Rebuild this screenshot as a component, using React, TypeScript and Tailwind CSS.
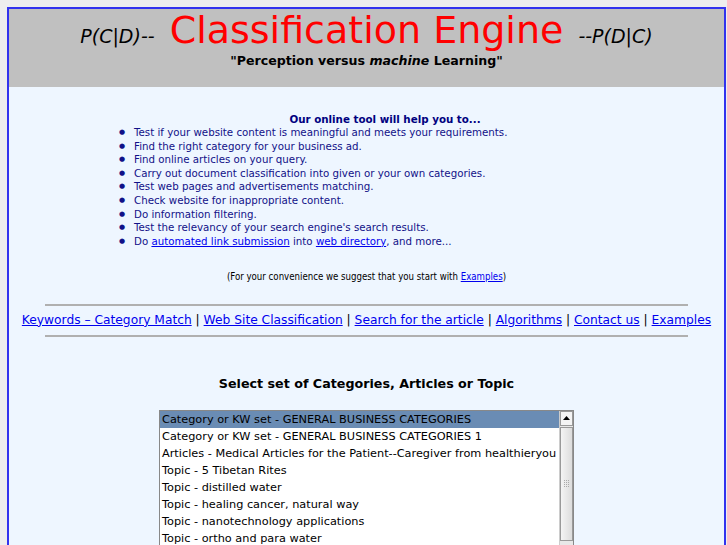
import React from "react";

const items: React.ReactNode[] = [
  "Test if your website content is meaningful and meets your requirements.",
  "Find the right category for your business ad.",
  "Find online articles on your query.",
  "Carry out document classification into given or your own categories.",
  "Test web pages and advertisements matching.",
  "Check website for inappropriate content.",
  "Do information filtering.",
  "Test the relevancy of your search engine's search results.",
  <>
    Do <a className="text-[#0000ee] underline" href="#">automated link submission</a> into{" "}
    <a className="text-[#0000ee] underline" href="#">web directory</a>, and more...
  </>,
];

const links = [
  "Keywords – Category Match",
  "Web Site Classification",
  "Search for the article",
  "Algorithms",
  "Contact us",
  "Examples",
];

const options = [
  "Category or KW set - GENERAL BUSINESS CATEGORIES",
  "Category or KW set - GENERAL BUSINESS CATEGORIES 1",
  "Articles - Medical Articles for the Patient--Caregiver from healthieryou",
  "Topic - 5 Tibetan Rites",
  "Topic - distilled water",
  "Topic - healing cancer, natural way",
  "Topic - nanotechnology applications",
  "Topic - ortho and para water",
  "Topic - water",
];

export default function App() {
  return (
    <div className="h-[545px] overflow-hidden bg-[#eeeeee] pt-[7px] pl-[7px] font-['DejaVu_Sans',sans-serif]">
      <div className="w-[719px] h-[600px] border-2 border-[#3333ee] bg-[#eef6ff]">
        <div className="bg-[#c0c0c0] h-[78px] flex flex-col items-center">
          <div className="flex items-baseline mt-[1px] leading-[40px]">
            <span className="italic text-[19px] text-black">P(C|D)--</span>
            <span className="text-[38px] text-[#ff0000] mx-[15px]">Classification Engine</span>
            <span className="italic text-[19px] text-black">--P(D|C)</span>
          </div>
          <div className="-mt-[3px] font-bold text-[12.6px] text-black leading-[16px]">
            "Perception versus <i>machine</i> Learning"
          </div>
        </div>
        <div className="pt-[25px]">
          <div className="ml-[105px] w-[542px]">
            <div className="text-center font-bold text-[10.3px] text-[#000080] leading-[14px]">
              Our online tool will help you to...
            </div>
            <ul className="text-[10.25px] text-[#111188] leading-[13.6px] pl-[5px]">
              {items.map((t, i) => (
                <li key={i} className="flex">
                  <span className="w-[15px] shrink-0 text-[7px]">●</span>
                  <span>{t}</span>
                </li>
              ))}
            </ul>
          </div>
          <div className="mt-[22px] text-center text-[9.6px] text-black font-['DejaVu_Sans_Condensed','DejaVu_Sans',sans-serif]">
            (For your convenience we suggest that you start with{" "}
            <a className="text-[#0000ee] underline" href="#">Examples</a>)
          </div>
          <hr className="mx-auto w-[90%] mt-[19px] border-t-2 border-[#b0b0b0]" />
          <div className="text-center text-[12.25px] leading-[29px] text-black whitespace-nowrap">
            {links.map((l, i) => (
              <React.Fragment key={i}>
                {i > 0 && " | "}
                <a className="text-[#0000ee] underline" href="#">{l}</a>
              </React.Fragment>
            ))}
          </div>
          <hr className="mx-auto w-[90%] border-t-2 border-[#b0b0b0]" />
          <div className="mt-[37px] text-center font-bold text-[12.7px] text-black">
            Select set of Categories, Articles or Topic
          </div>
          <div className="mt-[17px] ml-[150px] w-[415px] h-[200px] border border-[#888] bg-white flex">
            <div className="flex-1 text-[11.3px] text-black">
              {options.map((o, i) => (
                <div
                  key={i}
                  className={
                    "h-[17px] leading-[17px] pl-[2px] whitespace-nowrap overflow-hidden " +
                    (i === 0 ? "bg-[#6a8cb4]" : "")
                  }
                >
                  {o}
                </div>
              ))}
            </div>
            <div className="w-[14px] bg-[#e8e8e8] border-l border-[#cccccc] flex flex-col">
              <div className="h-[15px] border border-[#999] bg-[#f4f4f4] flex items-center justify-center">
                <svg width="7" height="4" viewBox="0 0 7 4"><path d="M0 4L3.5 0L7 4Z" fill="#000" /></svg>
              </div>
              <div className="mt-[1px] h-[114px] border border-[#999] bg-gradient-to-r from-[#f4f4f4] to-[#dcdcdc] flex items-center justify-center">
                <div className="grid grid-cols-3 gap-[1px]">
                  {Array.from({ length: 12 }).map((_, i) => (
                    <div key={i} className="w-[1px] h-[1px] bg-[#aaa]" />
                  ))}
                </div>
              </div>
            </div>
          </div>
        </div>
      </div>
    </div>
  );
}
